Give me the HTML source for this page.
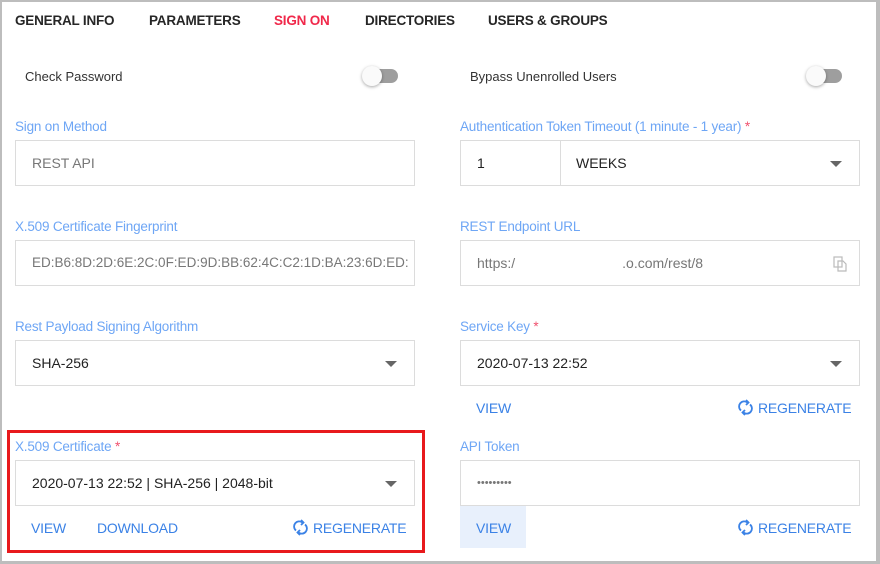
<!DOCTYPE html>
<html><head><style>
*{margin:0;padding:0;box-sizing:border-box}
body{width:880px;height:564px;background:#fff;font-family:"Liberation Sans",sans-serif;position:relative;overflow:hidden;border:2px solid #bdbdbd;border-right-width:4px;border-bottom-width:3px}
.a{position:absolute;white-space:nowrap}
.tab{font-size:13.5px;font-weight:bold;color:#262626;top:11px;letter-spacing:-.2px}
.lbl{font-size:13.5px;color:#6ea6f5;letter-spacing:-.2px}
.lbl b{color:#f0506e;font-weight:normal}
.box{position:absolute;border:1px solid #dcdcdc;height:46px;background:#fff;font-size:14px;color:#222;padding-left:16px;line-height:44px;overflow:hidden;white-space:nowrap}
.g{color:#777}
.car{position:absolute;right:17px;top:20px;width:0;height:0;border-left:6px solid transparent;border-right:6px solid transparent;border-top:6px solid #666}
.btn{font-size:14px;color:#3b82e6;letter-spacing:-.2px}
.btn svg{vertical-align:-3px;margin-right:5px}
.tg{position:absolute;width:34px;height:14px;border-radius:7px;background:#9e9e9e}
.tg i{position:absolute;left:-2px;top:-3px;width:20px;height:20px;border-radius:50%;background:#fafafa;box-shadow:0 1px 3px rgba(0,0,0,.35)}
.sm{font-size:13px;color:#333}
</style></head><body>
<div class="a tab" style="left:13px">GENERAL INFO</div>
<div class="a tab" style="left:147px">PARAMETERS</div>
<div class="a tab" style="left:272px;color:#f0284a">SIGN ON</div>
<div class="a tab" style="left:363px">DIRECTORIES</div>
<div class="a tab" style="left:486px">USERS &amp; GROUPS</div>

<div class="a sm" style="left:23px;top:67px">Check Password</div>
<div class="tg" style="left:362px;top:67px"><i></i></div>
<div class="a sm" style="left:468px;top:67px">Bypass Unenrolled Users</div>
<div class="tg" style="left:806px;top:67px"><i></i></div>

<div class="a lbl" style="left:13px;top:117px">Sign on Method</div>
<div class="box g" style="left:13px;top:138px;width:400px">REST API</div>
<div class="a lbl" style="left:458px;top:117px">Authentication Token Timeout (1 minute - 1 year) <b>*</b></div>
<div class="box" style="left:458px;top:138px;width:101px">1</div>
<div class="box" style="left:558px;top:138px;width:300px;padding-left:15px">WEEKS<span class="car"></span></div>

<div class="a lbl" style="left:13px;top:217px">X.509 Certificate Fingerprint</div>
<div class="box g" style="left:13px;top:238px;width:400px;font-size:13.5px">ED:B6:8D:2D:6E:2C:0F:ED:9D:BB:62:4C:C2:1D:BA:23:6D:ED:</div>
<div class="a lbl" style="left:458px;top:217px">REST Endpoint URL</div>
<div class="box g" style="left:458px;top:238px;width:400px">https:/<span style="display:inline-block;width:107px"></span>.o.com/rest/8
<svg style="position:absolute;right:12px;top:15px" width="14" height="16" viewBox="0 0 14 16" fill="none" stroke="#bbb" stroke-width="1.2"><rect x="1" y="1" width="8" height="10"/><path d="M5 5h5l3 3v7H5z"/></svg></div>

<div class="a lbl" style="left:13px;top:317px">Rest Payload Signing Algorithm</div>
<div class="box" style="left:13px;top:338px;width:400px">SHA-256<span class="car"></span></div>
<div class="a lbl" style="left:458px;top:317px">Service Key <b>*</b></div>
<div class="box" style="left:458px;top:338px;width:400px">2020-07-13 22:52<span class="car"></span></div>
<div class="a btn" style="left:474px;top:398px">VIEW</div>
<div class="a btn" style="left:736px;top:397px"><svg width="15" height="17" viewBox="0 0 15 17" fill="none" stroke="#3b82e6" stroke-width="1.8"><path d="M3 11.5A5 5 0 0 1 9.5 3.5"/><path d="M12 5.5A5 5 0 0 1 5.5 13.5"/><path d="M8 1l2.5 2.5L8 6" /><path d="M7 16l-2.5-2.5L7 11"/></svg>REGENERATE</div>

<div class="a" style="left:5px;top:428px;width:418px;height:123px;border:3px solid #e8191c"></div>
<div class="a lbl" style="left:13px;top:437px">X.509 Certificate <b>*</b></div>
<div class="box" style="left:13px;top:458px;width:400px">2020-07-13 22:52 | SHA-256 | 2048-bit<span class="car"></span></div>
<div class="a btn" style="left:29px;top:518px">VIEW</div>
<div class="a btn" style="left:95px;top:518px">DOWNLOAD</div>
<div class="a btn" style="left:291px;top:517px"><svg width="15" height="17" viewBox="0 0 15 17" fill="none" stroke="#3b82e6" stroke-width="1.8"><path d="M3 11.5A5 5 0 0 1 9.5 3.5"/><path d="M12 5.5A5 5 0 0 1 5.5 13.5"/><path d="M8 1l2.5 2.5L8 6" /><path d="M7 16l-2.5-2.5L7 11"/></svg>REGENERATE</div>

<div class="a lbl" style="left:458px;top:437px">API Token</div>
<div class="box g" style="left:458px;top:458px;width:400px;font-size:11px">•••••••••</div>
<div class="a" style="left:458px;top:504px;width:66px;height:42px;background:#e8f0fc"></div>
<div class="a btn" style="left:474px;top:518px">VIEW</div>
<div class="a btn" style="left:736px;top:517px"><svg width="15" height="17" viewBox="0 0 15 17" fill="none" stroke="#3b82e6" stroke-width="1.8"><path d="M3 11.5A5 5 0 0 1 9.5 3.5"/><path d="M12 5.5A5 5 0 0 1 5.5 13.5"/><path d="M8 1l2.5 2.5L8 6" /><path d="M7 16l-2.5-2.5L7 11"/></svg>REGENERATE</div>
</body></html>
